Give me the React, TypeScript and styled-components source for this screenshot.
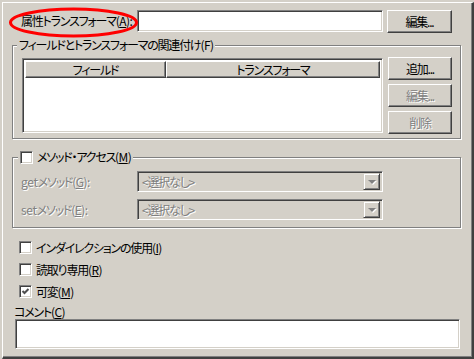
import React from 'react';
import styled, { createGlobalStyle } from 'styled-components';

const GlobalStyle = createGlobalStyle`
  html, body {
    margin: 0;
    padding: 0;
    background: #d4d0c8;
  }
  body {
    font-family: "Noto Sans CJK JP", sans-serif;
    font-size: 12px;
    letter-spacing: -1.2px;
    font-feature-settings: "palt" 1;
    color: #000;
  }
`;

const Dialog = styled.div`
  position: relative;
  box-sizing: border-box;
  margin: 2px 0 0 2px;
  width: 472px;
  height: 357px;
  background: #d4d0c8;
  border-top: 1px solid #fff;
  border-left: 1px solid #fff;
  border-right: 2px solid #404040;
  border-bottom: 2px solid #404040;
  box-shadow: inset -1px -1px 0 #808080;
  padding: 7px 0 0 9px;
  display: flex;
  flex-direction: column;
`;

const Row = styled.div`
  display: flex;
  align-items: flex-start;
`;

const FieldLabel = styled.label<{ $width: number; $indent?: number }>`
  box-sizing: border-box;
  flex: none;
  width: ${p => p.$width}px;
  padding-left: ${p => p.$indent ?? 0}px;
  line-height: 22px;
  white-space: nowrap;
`;

const U = styled.span`
  text-decoration: underline;
`;

const Latin = styled.span`
  letter-spacing: -0.3px;
`;

// mnemonic like (A) — latin glyphs keep most of their own spacing
const KeyWrap = styled.span`
  letter-spacing: -0.6px;
`;

const Key = ({ k }: { k: string }) => (
  <KeyWrap>(<U>{k}</U>)</KeyWrap>
);

const Sunken = styled.div<{ $w: number; $h: number; $bg?: string }>`
  box-sizing: border-box;
  flex: none;
  width: ${p => p.$w}px;
  height: ${p => p.$h}px;
  background: ${p => p.$bg ?? '#fff'};
  border-top: 1px solid #808080;
  border-left: 1px solid #808080;
  border-right: 1px solid #fff;
  border-bottom: 1px solid #fff;
  box-shadow: inset 1px 1px 0 #404040, inset -1px -1px 0 #d4d0c8;
`;

const Button = styled.div<{ $w: number; $disabled?: boolean; $ml?: number }>`
  box-sizing: border-box;
  flex: none;
  width: ${p => p.$w}px;
  height: 23px;
  margin-left: ${p => p.$ml ?? 0}px;
  display: flex;
  align-items: center;
  justify-content: center;
  background: #d4d0c8;
  border-top: 1px solid #fff;
  border-left: 1px solid #fff;
  border-right: 1px solid #404040;
  border-bottom: 1px solid #404040;
  box-shadow: inset -1px -1px 0 #808080;
  color: ${p => (p.$disabled ? '#808080' : '#000')};
  text-shadow: ${p => (p.$disabled ? '1px 1px 0 #fff' : 'none')};
  white-space: nowrap;
`;

const Group = styled.div<{ $h: number; $mt: number }>`
  position: relative;
  box-sizing: border-box;
  width: 449px;
  height: ${p => p.$h}px;
  margin-top: ${p => p.$mt}px;
  border: 1px solid #808080;
  box-shadow: 1px 1px 0 #fff, inset 1px 1px 0 #fff;
`;

const GroupTitle = styled.div<{ $left: number; $top: number }>`
  position: absolute;
  left: ${p => p.$left}px;
  top: ${p => p.$top}px;
  padding: 0 2px;
  height: 14px;
  line-height: 14px;
  background: #d4d0c8;
  display: flex;
  align-items: center;
  gap: 4px;
  white-space: nowrap;
`;

const AssocBody = styled.div`
  display: flex;
  padding: 12px 0 0 9px;
`;

const List = styled(Sunken)`
  padding: 2px;
`;

const HeaderRow = styled.div`
  display: flex;
  height: 17px;
`;

const HeaderCell = styled.div<{ $w: number }>`
  box-sizing: border-box;
  width: ${p => p.$w}px;
  height: 17px;
  display: flex;
  align-items: center;
  justify-content: center;
  background: #d4d0c8;
  border-top: 1px solid #fff;
  border-left: 1px solid #fff;
  border-right: 1px solid #404040;
  border-bottom: 1px solid #404040;
  box-shadow: inset -1px -1px 0 #808080;
`;

const ButtonColumn = styled.div`
  display: flex;
  flex-direction: column;
  gap: 4px;
  margin-left: 5px;
  margin-top: -1px;
`;

const AccessBody = styled.div`
  display: flex;
  flex-direction: column;
  gap: 6px;
  padding: 13px 0 0 8px;
`;

const Disabled = styled.span`
  color: #808080;
  text-shadow: 1px 1px 0 #fff;
`;

const Combo = styled(Sunken)`
  display: flex;
  align-items: center;
  justify-content: space-between;
  padding: 0 2px 0 4px;
`;

const DropButton = styled.div`
  box-sizing: border-box;
  width: 17px;
  height: 17px;
  display: flex;
  align-items: center;
  justify-content: center;
  background: #d4d0c8;
  border-top: 1px solid #d4d0c8;
  border-left: 1px solid #d4d0c8;
  border-right: 1px solid #404040;
  border-bottom: 1px solid #404040;
  box-shadow: inset 1px 1px 0 #fff, inset -1px -1px 0 #808080;
`;

const Arrow = styled.div`
  width: 0;
  height: 0;
  border-left: 4px solid transparent;
  border-right: 4px solid transparent;
  border-top: 4px solid #808080;
  filter: drop-shadow(1px 1px 0 #fff);
`;

const CheckList = styled.div`
  display: flex;
  flex-direction: column;
  margin-top: 8px;
  padding-left: 7px;
`;

const CheckRow = styled.div`
  display: flex;
  align-items: center;
  height: 22px;
  gap: 4px;
  white-space: nowrap;
`;

const Box = styled.div`
  box-sizing: border-box;
  flex: none;
  width: 13px;
  height: 13px;
  background: #fff;
  border-top: 1px solid #808080;
  border-left: 1px solid #808080;
  border-right: 1px solid #fff;
  border-bottom: 1px solid #fff;
  box-shadow: inset 1px 1px 0 #404040, inset -1px -1px 0 #d4d0c8;
  display: flex;
  align-items: center;
  justify-content: center;
`;

const CommentLabel = styled.div`
  margin-top: 3px;
  padding-left: 2px;
  height: 14px;
  line-height: 14px;
`;

const CommentField = styled(Sunken)`
  margin-left: 3px;
`;

const Highlight = styled.svg`
  position: absolute;
  left: 5px;
  top: 4px;
  pointer-events: none;
`;

const CheckBox = ({ checked }: { checked?: boolean }) => (
  <Box>
    {checked && (
      <svg width="9" height="9" viewBox="0 0 9 9">
        <polyline points="1.5,4 3.5,6 7.5,2" fill="none" stroke="#505050" strokeWidth="2" />
      </svg>
    )}
  </Box>
);

export default function App() {
  return (
    <>
      <GlobalStyle />
      <Dialog>
        <Row>
          <FieldLabel $width={125} $indent={9}>
            属性トランスフォーマ<Key k="A" />:
          </FieldLabel>
          <Sunken $w={246} $h={22} />
          <Button $w={65} $ml={4}>編集...</Button>
        </Row>

        <Group $h={94} $mt={12}>
          <GroupTitle $left={4} $top={-8}>
            <span>フィールドとトランスフォーマの関連付け<KeyWrap>(F)</KeyWrap></span>
          </GroupTitle>
          <AssocBody>
            <List $w={361} $h={75}>
              <HeaderRow>
                <HeaderCell $w={141}>フィールド</HeaderCell>
                <HeaderCell $w={214}>トランスフォーマ</HeaderCell>
              </HeaderRow>
            </List>
            <ButtonColumn>
              <Button $w={64}>追加...</Button>
              <Button $w={64} $disabled>編集...</Button>
              <Button $w={64} $disabled>削除</Button>
            </ButtonColumn>
          </AssocBody>
        </Group>

        <Group $h={71} $mt={18}>
          <GroupTitle $left={5} $top={-8}>
            <CheckBox />
            <span>メソッド・アクセス<Key k="M" /></span>
          </GroupTitle>
          <AccessBody>
            <Row>
              <FieldLabel $width={116}>
                <Disabled><Latin>get</Latin>メソッド<Key k="G" />:</Disabled>
              </FieldLabel>
              <Combo $w={246} $h={21} $bg="#d4d0c8">
                <Disabled>&lt;選択なし&gt;</Disabled>
                <DropButton><Arrow /></DropButton>
              </Combo>
            </Row>
            <Row>
              <FieldLabel $width={116}>
                <Disabled><Latin>set</Latin>メソッド<Key k="E" />:</Disabled>
              </FieldLabel>
              <Combo $w={246} $h={21} $bg="#d4d0c8">
                <Disabled>&lt;選択なし&gt;</Disabled>
                <DropButton><Arrow /></DropButton>
              </Combo>
            </Row>
          </AccessBody>
        </Group>

        <CheckList>
          <CheckRow><CheckBox /><span>インダイレクションの使用<Key k="I" /></span></CheckRow>
          <CheckRow><CheckBox /><span>読取り専用<Key k="R" /></span></CheckRow>
          <CheckRow><CheckBox checked /><span>可変<Key k="M" /></span></CheckRow>
        </CheckList>

        <CommentLabel>コメント<Key k="C" /></CommentLabel>
        <CommentField $w={445} $h={30} />

        <Highlight width="132" height="32" viewBox="0 0 132 32">
          <ellipse cx="65.5" cy="15.5" rx="63" ry="13.5" fill="none" stroke="#ff0000" strokeWidth="3" />
        </Highlight>
      </Dialog>
    </>
  );
}
